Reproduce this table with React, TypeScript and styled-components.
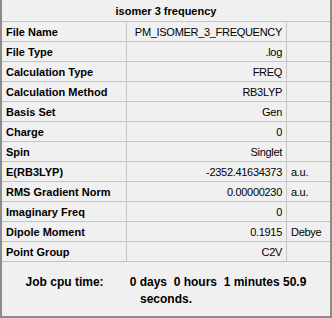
import React from "react";
import styled, { createGlobalStyle } from "styled-components";

const GlobalStyle = createGlobalStyle`
  html, body {
    margin: 0;
    padding: 0;
    background: #f0f0f0;
  }
`;

const Panel = styled.div`
  width: 332px;
  height: 318px;
  box-sizing: border-box;
  background: #f0f0f0;
  border-left: 2px solid #8c8c8c;
  border-right: 2px solid #8c8c8c;
  border-bottom: 2px solid #8c8c8c;
  font-family: "Liberation Sans", Arial, sans-serif;
  font-size: 11px;
  color: #000;
  display: flex;
  flex-direction: column;
`;

const Title = styled.div`
  height: 21px;
  border-bottom: 1px solid #c4c4c4;
  display: flex;
  align-items: center;
  justify-content: center;
  font-weight: bold;
`;

const Grid = styled.div`
  display: grid;
  grid-template-columns: 125px 160px 43px;
  grid-auto-rows: 20px;
`;

const Cell = styled.div<{ $kind: "label" | "value" | "unit" }>`
  box-sizing: border-box;
  border-bottom: 1px solid #c4c4c4;
  border-right: ${(p) => (p.$kind === "unit" ? "none" : "1px solid #c4c4c4")};
  display: flex;
  align-items: center;
  padding: 0 4px;
  white-space: nowrap;
  font-weight: ${(p) => (p.$kind === "label" ? "bold" : "normal")};
  letter-spacing: ${(p) => (p.$kind === "label" ? "0" : "-0.3px")};
  justify-content: ${(p) => (p.$kind === "value" ? "flex-end" : "flex-start")};
`;

const Footer = styled.div`
  flex: 1;
  display: flex;
  align-items: center;
  justify-content: center;
  text-align: center;
  font-weight: bold;
  font-size: 12px;
  line-height: 17px;
  padding-top: 4px;
`;

const Gap = styled.span`
  display: inline-block;
  width: 26px;
`;

const rows: [string, string, string][] = [
  ["File Name", "PM_ISOMER_3_FREQUENCY", ""],
  ["File Type", ".log", ""],
  ["Calculation Type", "FREQ", ""],
  ["Calculation Method", "RB3LYP", ""],
  ["Basis Set", "Gen", ""],
  ["Charge", "0", ""],
  ["Spin", "Singlet", ""],
  ["E(RB3LYP)", "-2352.41634373", "a.u."],
  ["RMS Gradient Norm", "0.00000230", "a.u."],
  ["Imaginary Freq", "0", ""],
  ["Dipole Moment", "0.1915", "Debye"],
  ["Point Group", "C2V", ""],
];

export default function App() {
  return (
    <>
      <GlobalStyle />
      <Panel>
        <Title>isomer 3 frequency</Title>
        <Grid>
          {rows.map(([label, value, unit]) => (
            <React.Fragment key={label}>
              <Cell $kind="label">{label}</Cell>
              <Cell $kind="value">{value}</Cell>
              <Cell $kind="unit">{unit}</Cell>
            </React.Fragment>
          ))}
        </Grid>
        <Footer>
          <div>
            Job cpu time:
            <Gap />
            0 days&nbsp;&nbsp;0 hours&nbsp;&nbsp;1 minutes 50.9
            <br />
            seconds.
          </div>
        </Footer>
      </Panel>
    </>
  );
}
